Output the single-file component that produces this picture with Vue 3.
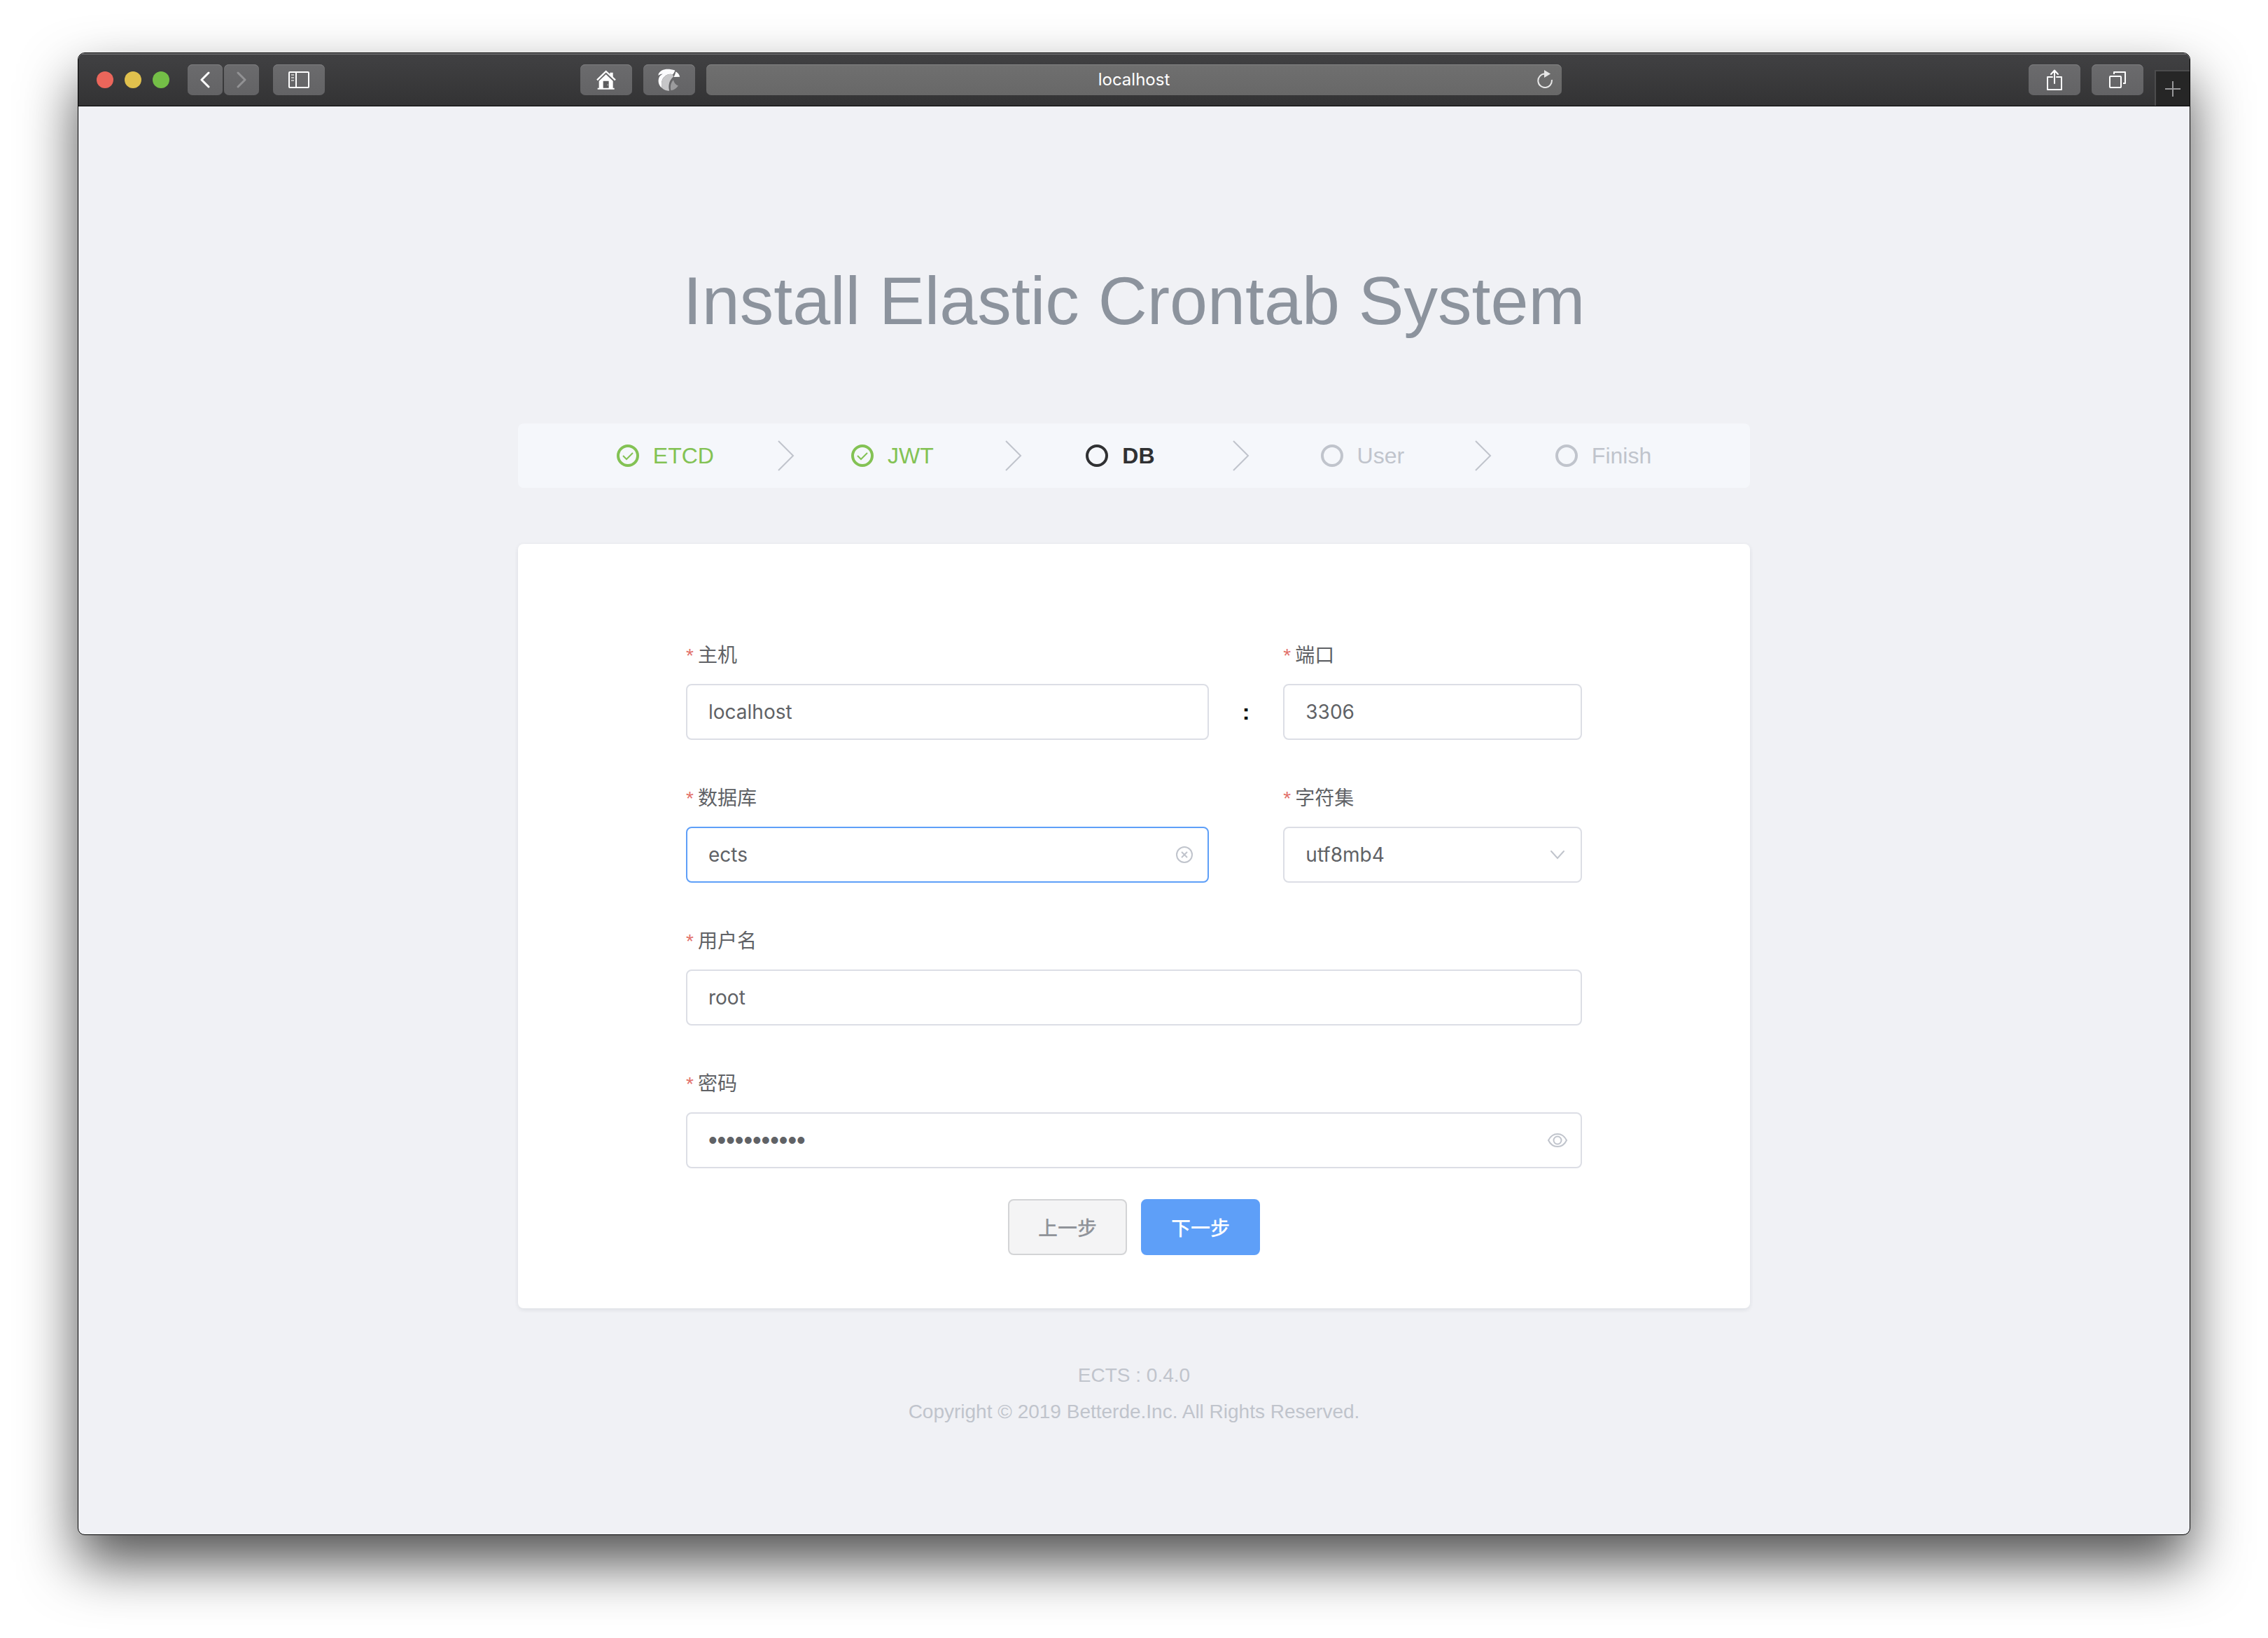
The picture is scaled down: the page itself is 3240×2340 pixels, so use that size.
<script setup>
import { ref } from 'vue'

const steps = [
  { title: 'ETCD', state: 'done' },
  { title: 'JWT', state: 'done' },
  { title: 'DB', state: 'active' },
  { title: 'User', state: 'wait' },
  { title: 'Finish', state: 'wait' },
]

const address = ref('localhost')
const host = ref('localhost')
const port = ref('3306')
const database = ref('ects')
const charset = ref('utf8mb4')
const username = ref('root')
const password = ref('betterde123')
</script>

<template>
  <div class="desktop">
    <div class="window">
      <header class="toolbar">
        <div class="side">
          <div class="lights">
            <span class="light red"></span>
            <span class="light yellow"></span>
            <span class="light green"></span>
          </div>
          <div class="history">
            <button class="tool narrow" type="button" aria-label="Back">
              <svg width="14" height="24" viewBox="0 0 14 24" fill="none" stroke="#fff" stroke-width="3" stroke-linecap="round" stroke-linejoin="round"><path d="M12 2 2 12l10 10" /></svg>
            </button>
            <button class="tool narrow" type="button" aria-label="Forward">
              <svg width="14" height="24" viewBox="0 0 14 24" fill="none" stroke="#929294" stroke-width="3" stroke-linecap="round" stroke-linejoin="round"><path d="m2 2 10 10L2 22" /></svg>
            </button>
          </div>
          <button class="tool" type="button" aria-label="Sidebar">
            <svg width="30" height="24" viewBox="0 0 30 24" fill="none" stroke="#fff" stroke-width="2">
              <rect x="1" y="1" width="28" height="22" rx="1" /><path d="M11 1v22" />
              <path d="M4 5h4M4 9h4M4 13h4" stroke="#bbb" />
            </svg>
          </button>
          <button class="tool push" type="button" aria-label="Home">
            <svg width="28" height="28" viewBox="157 91 84 84">
              <path d="m160 134 38-37 40 37" fill="none" stroke="#fff" stroke-width="7" />
              <path d="M215 102h13v22l-13-12z" fill="#fff" />
              <path d="m168 138 30-28 30 28v30h6v6h-72v-6h6z" fill="#fff" />
              <path d="M186 138h24v30h-24z" fill="#5c5c5e" /><path d="M204 153h3v3h-3z" fill="#fff" />
            </svg>
          </button>
          <button class="tool" type="button" aria-label="Extension">
            <svg width="32" height="32" viewBox="421 83 97 98">
              <path d="M423 105C432 88 458 78 495 91c-3 10-7 15-10 18-10-5-20-2-30 4-18 12-22 32-17 55-15-10-20-32-12-48 4-7 9-10 15-14-7 0-13 3-19 8z" fill="#fbfbfd" />
              <path d="M455 113c10-6 20-9 30-4l3 9c-18 15-24 38-18 62-13 0-24-4-32-12-5-23-1-43 17-55z" fill="#c6c6c8" />
              <path d="M498 96c10 5 16 13 18 23l-27 1c5-8 8-15 9-24z" fill="#fff" />
              <path d="M488 133c3 13 10 21 21 25-8 11-18 18-32 21-4-18-1-34 11-46z" fill="#9b9b9d" />
            </svg>
          </button>
        </div>

        <div class="address">
          <input v-model="address" type="text" aria-label="Address" />
          <button class="reload" type="button" aria-label="Reload">
            <svg width="22" height="26" viewBox="0 0 22 26">
              <path d="M10.500 5.500A9.800 9.800 0 1 0 20.800 14" fill="none" stroke="#e6e6e6" stroke-width="2" />
              <path d="m10 0 9 5.500-9 5.500z" fill="#e6e6e6" />
            </svg>
          </button>
        </div>

        <div class="side end">
          <button class="tool" type="button" aria-label="Share">
            <svg width="22" height="30" viewBox="0 0 22 30" fill="none" stroke="#fff" stroke-width="2" stroke-linejoin="round" stroke-linecap="round">
              <path d="M8 11H1v18h20V11h-7M11 20V2M6 7l5-5.500L16 7" />
            </svg>
          </button>
          <button class="tool" type="button" aria-label="Tabs">
            <svg width="24" height="24" viewBox="0 0 24 24" fill="none" stroke="#fff" stroke-width="2" stroke-linejoin="round">
              <rect x="1" y="7" width="16" height="16" rx="1" /><path d="M7 4V1h16v16h-3" />
            </svg>
          </button>
          <button class="new-tab" type="button" aria-label="New tab">
            <svg width="22" height="22" viewBox="0 0 22 22" stroke="#98989a" stroke-width="2"><path d="M11 0v22M0 11h22" /></svg>
          </button>
        </div>
      </header>

      <main class="page">
        <h1>Install Elastic Crontab System</h1>

        <ol class="steps">
          <li v-for="(step, i) in steps" :key="step.title" :class="['step', step.state]">
            <svg class="step-icon" width="32" height="32" viewBox="0 0 32 32" fill="none" stroke="currentColor">
              <circle cx="16" cy="16" r="14" stroke-width="4" />
              <path v-if="step.state === 'done'" d="m9 16 5 5 9-9" stroke-width="2" />
            </svg>
            <span>{{ step.title }}</span>
            <span v-if="i < steps.length - 1" class="arrow">
              <svg width="24" height="44" viewBox="0 0 24 44" fill="none" stroke="#c0c4cc" stroke-width="2"><path d="m1 1 21 21L1 43" /></svg>
            </span>
          </li>
        </ol>

        <form class="card" @submit.prevent>
          <div class="row">
            <div class="field">
              <label for="host">主机</label>
              <input id="host" v-model="host" type="text" />
            </div>
            <span class="colon">:</span>
            <div class="field">
              <label for="port">端口</label>
              <input id="port" v-model="port" type="text" />
            </div>
          </div>
          <div class="row">
            <div class="field">
              <label for="database">数据库</label>
              <div class="control">
                <input id="database" v-model="database" class="focused" type="text" />
                <button class="suffix" type="button" aria-label="Clear" @click="database = ''">
                  <svg width="28" height="28" viewBox="0 0 28 28" fill="none" stroke="#c0c4cc" stroke-width="2"><circle cx="14" cy="14" r="11" /><path d="m10 10 8 8m0-8-8 8" /></svg>
                </button>
              </div>
            </div>
            <span></span>
            <div class="field">
              <label for="charset">字符集</label>
              <div class="control">
                <select id="charset" v-model="charset">
                  <option>utf8mb4</option>
                  <option>utf8</option>
                </select>
                <span class="suffix passive">
                  <svg width="28" height="28" viewBox="0 0 28 28" fill="none" stroke="#c0c4cc" stroke-width="2" stroke-linecap="round"><path d="m5 9 9 10 9-10" /></svg>
                </span>
              </div>
            </div>
          </div>
          <div class="field">
            <label for="username">用户名</label>
            <input id="username" v-model="username" type="text" />
          </div>
          <div class="field">
            <label for="password">密码</label>
            <div class="control">
              <input id="password" v-model="password" type="password" />
              <button class="suffix" type="button" aria-label="Show password">
                <svg width="28" height="28" viewBox="0 0 28 28" fill="none" stroke="#c0c4cc" stroke-width="2"><path d="M1 14c3-6 8-9 13-9s10 3 13 9c-3 6-8 9-13 9s-10-3-13-9z" /><circle cx="14" cy="14" r="5.500" /></svg>
              </button>
            </div>
          </div>
          <div class="actions">
            <button class="btn" type="button">上一步</button>
            <button class="btn primary" type="submit">下一步</button>
          </div>
        </form>

        <footer>
          <p>ECTS : 0.4.0</p>
          <p>Copyright © 2019 Betterde.Inc. All Rights Reserved.</p>
        </footer>
      </main>
    </div>
  </div>
</template>

<style>
body {
  margin: 0;
  background: #fff;
}
</style>

<style scoped>
.desktop {
  padding: 75px 111px 147px;
  overflow: hidden;
  font-family: "Liberation Sans", "Noto Sans CJK SC", sans-serif;
}

.window {
  overflow: hidden;
  border: 1px solid #000;
  border-radius: 10px;
  background: #f0f1f5;
  box-shadow: 0 40px 80px rgba(0, 0, 0, 0.68);
}

button,
input,
select {
  box-sizing: border-box;
  margin: 0;
  padding: 0;
  border: 0;
  outline: 0;
  background: none;
  font: inherit;
  color: inherit;
}

svg {
  display: block;
}

/* Browser toolbar */
.toolbar {
  display: grid;
  grid-template-columns: 1fr minmax(0, 1222px) 1fr;
  column-gap: 16px;
  align-items: center;
  box-sizing: border-box;
  height: 76px;
  border-bottom: 1px solid #000;
  background: linear-gradient(#414143, #333334);
  box-shadow: inset 0 2px 0 #6c6c6e;
}

.side {
  display: flex;
  align-items: center;
  gap: 16px;
  padding-left: 26px;
}

.side.end {
  justify-content: flex-end;
  padding-left: 0;
  align-self: stretch;
}

.lights {
  display: flex;
  gap: 16px;
  margin-right: 10px;
}

.light {
  width: 24px;
  height: 24px;
  border-radius: 50%;
}

.red {
  background: #eb665b;
}

.yellow {
  background: #e0c04d;
}

.green {
  background: #74be47;
}

.history {
  display: flex;
  gap: 2px;
  margin-right: 4px;
}

.tool {
  display: flex;
  align-items: center;
  justify-content: center;
  width: 74px;
  height: 44px;
  border-radius: 7px;
  background: linear-gradient(#6b6b6d, #636365);
  box-shadow: inset 0 1px 0 #7f7f81;
}

.tool.narrow {
  width: 50px;
}

.tool.push {
  margin-left: auto;
}

.address {
  position: relative;
}

.address input {
  display: block;
  width: 100%;
  height: 44px;
  border-radius: 7px;
  background: linear-gradient(#6f6f6f, #686868);
  box-shadow: inset 0 1px 0 #858585;
  font-family: Inter, sans-serif;
  font-size: 24px;
  text-align: center;
  color: #fff;
}

.reload {
  position: absolute;
  top: 8px;
  right: 13px;
}

.new-tab {
  display: flex;
  align-items: center;
  justify-content: center;
  align-self: flex-end;
  width: 50px;
  height: 51px;
  border-top: 2px solid #4c4c4d;
  border-left: 2px solid #4c4c4d;
  background: #262626;
}

/* Installer page */
.page {
  max-width: 1760px;
  margin: 0 auto;
  padding: 222px 0 149px;
}

h1 {
  margin: 0 0 119px;
  font-size: 97px;
  line-height: 112px;
  font-weight: 400;
  text-align: center;
  color: #8c939d;
}

.steps {
  display: flex;
  align-items: center;
  box-sizing: border-box;
  height: 92px;
  margin: 0 0 80px;
  padding: 0 8%;
  border-radius: 8px;
  background: #f5f7fb;
  font-size: 32px;
  line-height: 44px;
  list-style: none;
}

.step {
  display: flex;
  flex: 1;
  align-items: center;
  color: #c0c4cc;
}

.step:last-child {
  flex: none;
}

.step-icon {
  margin-right: 20px;
}

.step.done {
  color: #83c254;
}

.step.active {
  font-weight: 700;
  color: #303133;
}

.arrow {
  display: flex;
  flex: 1;
  justify-content: center;
  padding-left: 10px;
}

.card {
  display: flex;
  flex-direction: column;
  gap: 64px;
  padding: 140px 240px 76px;
  border-radius: 8px;
  background: #fff;
  box-shadow: 0 2px 6px rgba(0, 30, 40, 0.09);
  font-size: 28px;
  color: #606266;
}

.row {
  display: grid;
  grid-template-columns: 14fr 2fr 8fr;
}

.field {
  display: flex;
  flex-direction: column;
  gap: 20px;
}

.field label {
  line-height: 40px;
}

.field label::before {
  content: "*";
  margin-right: 6px;
  color: #e2716b;
}

.control {
  position: relative;
}

.field input,
.field select {
  display: block;
  width: 100%;
  height: 80px;
  padding: 0 30px;
  border: 2px solid #dcdee5;
  border-radius: 8px;
  background: #fff;
  font-family: Inter, "Noto Sans CJK SC", sans-serif;
  font-size: 28px;
  appearance: none;
}

.field .focused {
  border-color: #5e9ff8;
}

.field input[type="password"] {
  font-family: "Liberation Sans", sans-serif;
  font-size: 36px;
}

.suffix {
  position: absolute;
  top: 26px;
  right: 21px;
}

.passive {
  pointer-events: none;
}

.colon {
  align-self: end;
  font-size: 32px;
  line-height: 80px;
  font-weight: 700;
  text-align: center;
  color: #000;
}

.actions {
  display: flex;
  justify-content: center;
  gap: 20px;
  margin-top: -20px;
}

.btn {
  width: 170px;
  height: 80px;
  border: 2px solid #d3d4d6;
  border-radius: 8px;
  background: #f4f4f5;
  font-family: "Noto Sans CJK SC", sans-serif;
  font-weight: 500;
  color: #909399;
}

.btn.primary {
  border-color: #5e9ff8;
  background: #5e9ff8;
  color: #fff;
}

footer {
  margin-top: 70px;
  font-size: 28px;
  line-height: 52px;
  text-align: center;
  color: #c0c4cc;
}

footer p {
  margin: 0;
}
</style>
